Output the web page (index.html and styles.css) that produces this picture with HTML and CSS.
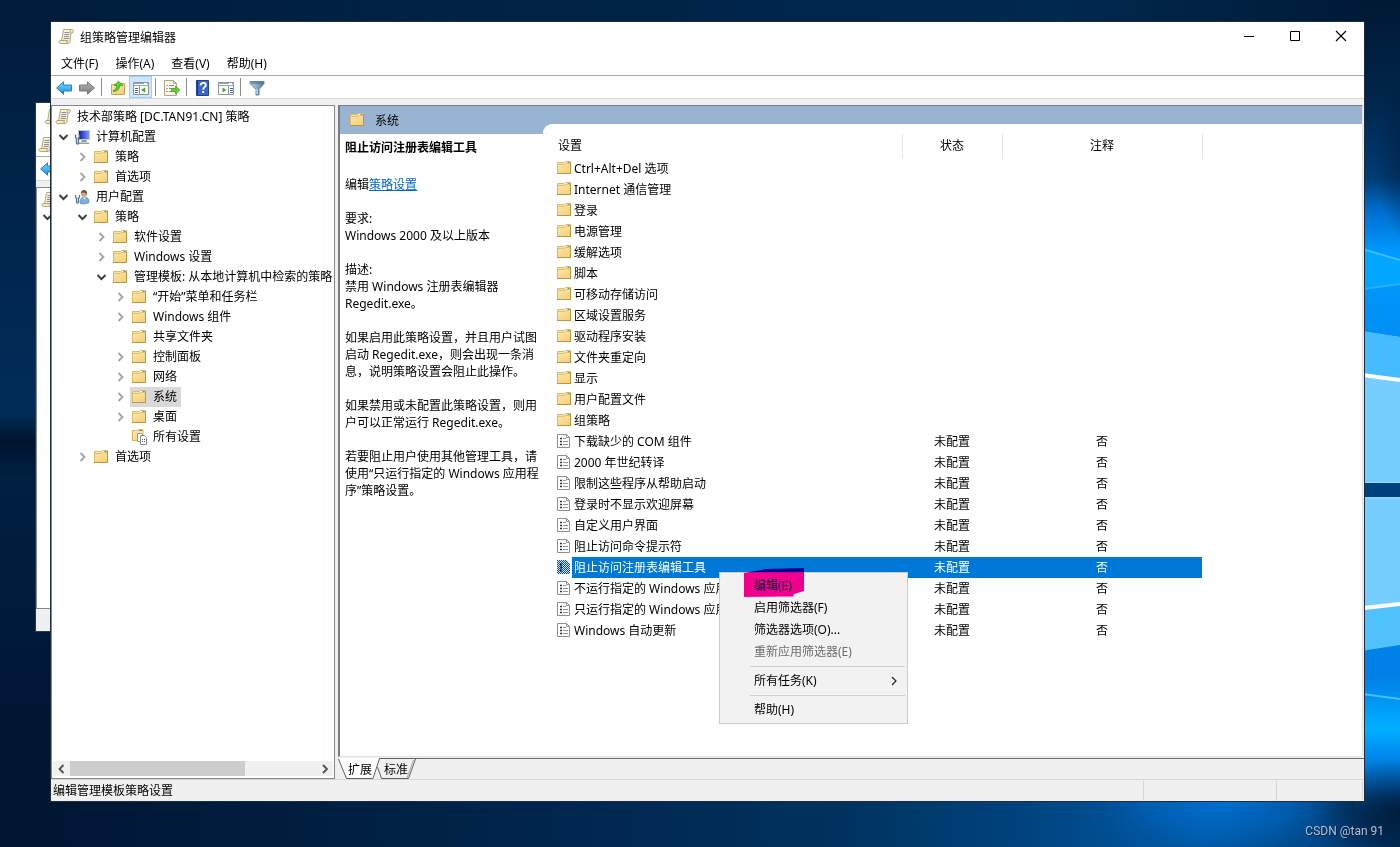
FILE: index.html
```html
<!DOCTYPE html>
<html lang="zh-CN">
<head>
<meta charset="utf-8">
<title>组策略管理编辑器</title>
<link rel="stylesheet" href="styles.css">
</head>
<body>
<svg class="defs" aria-hidden="true">
  <defs>
    <linearGradient id="gold" x1="0" y1="0" x2="0.6" y2="1"><stop offset="0" stop-color="#fdeab0"/><stop offset="1" stop-color="#f5d27c"/></linearGradient>
    <linearGradient id="blueArrow" x1="0" y1="0" x2="0" y2="1"><stop offset="0" stop-color="#7fd4fa"/><stop offset="1" stop-color="#0f96e6"/></linearGradient>
    <linearGradient id="greyArrow" x1="0" y1="0" x2="0" y2="1"><stop offset="0" stop-color="#b5b5b5"/><stop offset="1" stop-color="#7c7c7c"/></linearGradient>
    <linearGradient id="paper" x1="0" y1="0" x2="1" y2="1"><stop offset="0" stop-color="#fffdf0"/><stop offset="1" stop-color="#ecdcae"/></linearGradient>
    <linearGradient id="screen" x1="0" y1="0" x2="1" y2="0"><stop offset="0" stop-color="#0a14b8"/><stop offset="1" stop-color="#7fa4ff"/></linearGradient>
    <linearGradient id="funnel" x1="0" y1="0" x2="1" y2="0"><stop offset="0" stop-color="#b9d3e6"/><stop offset="1" stop-color="#557f9e"/></linearGradient>
    <pattern id="dither" width="2" height="2" patternUnits="userSpaceOnUse"><rect width="1" height="1" fill="#0a4f9a"/><rect x="1" y="1" width="1" height="1" fill="#0a4f9a"/></pattern>
  </defs>
  <symbol id="folder" viewBox="0 0 16 16">
    <path d="M1.500 2.500H8.500L9.500 1.500h5v12h-13z" fill="url(#gold)" stroke="#dcbb68"/>
    <path d="M9.500 2.500h2" stroke="#fff"/><path d="M11.500 2.500h2" stroke="#4a9be0"/>
    <path d="M2 4.500h6.500L9.500 3.500H14" fill="none" stroke="#e2c16c"/>
    <path d="M1 13.500h14M14.500 2v12" stroke="#bd9640" fill="none"/>
  </symbol>
  <symbol id="scroll" viewBox="0 0 16 16">
    <path d="M5.500.500h8.500c1.800 0 1.800 3.500 0 3.500h-1L12 12c0 1.800-.8 2.500-2 2.500H2.500C.5 14.500.5 11.500 2.500 11.500h1.200z" fill="url(#paper)" stroke="#a8935c" stroke-width=".8"/>
    <path d="M2.500 11.500h7c-1 1-.6 3 .6 3M13 4c-1 0-1.200-3 .5-3.500" fill="none" stroke="#a8935c" stroke-width=".8"/>
    <path d="M6.500 3.500h5M6.300 5.500h5M6 7.500h5M5.800 9.500h5" stroke="#8a8ea6" stroke-width="1"/>
  </symbol>
  <symbol id="computer" viewBox="0 0 16 16">
    <path d="M4.500 1.500h11v9h-11z" fill="url(#screen)" stroke="#c4c8cc"/>
    <path d="M8 11h4l1 2H7zM5 13.500h10v1.500H5z" fill="#9a9da0"/>
    <path d="M1.500 5.500v3l1 1V14c0 1.500 2 1.500 2 0V9.500l1-1v-3" fill="none" stroke="#5c7488" stroke-width="1.300"/>
    <path d="M3.500 8v6" stroke="#b9cfdf"/>
  </symbol>
  <symbol id="user" viewBox="0 0 16 16">
    <path d="M6 14c0-4 1.500-6 4.500-6s4.500 2 4.500 5c0 2-9 2.500-9 1z" fill="#78aee0" stroke="#4b82b8" stroke-width=".7"/>
    <path d="M9 8.500l1.500 2 1.500-2z" fill="#fff"/>
    <circle cx="10" cy="5" r="3" fill="#dba678"/><path d="M6.800 4.500C7 1.500 9 .800 10.500 1c2.500.3 3 3 1.800 5-.2-2-1.500-2.500-2.800-2.500-1 0-2 .4-2.700 1z" fill="#70503c"/>
    <path d="M1.500 6v2.500l1 1V13c0 1.500 2 1.500 2 0V9.500l1-1V6" fill="none" stroke="#5c7488" stroke-width="1.200"/><path d="M3.500 8v5" stroke="#b9cfdf"/>
  </symbol>
  <symbol id="allset" viewBox="0 0 16 16">
    <path d="M1.500 1.500h5l1-1h4.500v11H1.500z" fill="url(#gold)" stroke="#d9b45c"/><path d="M8 1.500h3" stroke="#4a9be0"/>
    <path d="M6.500 4.500h4l2 2v6h-6z" fill="#fff" stroke="#999"/>
    <path d="M9.500 6.500h4l2 2v7h-6z" fill="#fff" stroke="#8a8a8a"/>
    <path d="M11 10.500h1M13 10.500h1M11 12.500h1M13 12.500h1" stroke="#555"/>
  </symbol>
  <symbol id="setting" viewBox="0 0 16 16">
    <path d="M1.500 1.500h9l3 3v10h-12z" fill="#fff" stroke="#8e8e8e"/><path d="M10.500 1.500v3h3" fill="none" stroke="#8e8e8e"/>
    <path d="M4 5.500h2M4 8.500h2M4 11.500h2" stroke="#333" stroke-width="1.600"/><path d="M7 5.500h3M7 8.500h5M7 11.500h5" stroke="#8a92aa"/>
  </symbol>
  <symbol id="setting-on" viewBox="0 0 16 16">
    <path d="M1 1h9.500L14 4.500V15H1z" fill="#cfe2f3"/><path d="M4 5.500h2M4 8.500h2M4 11.500h2" stroke="#111" stroke-width="2"/>
    <path d="M1 1h9.500L14 4.500V15H1z" fill="url(#dither)"/>
  </symbol>
  <symbol id="back" viewBox="0 0 16 16"><path d="M.6 8L7.500 1.800V5h8v6h-8v3.200z" fill="url(#blueArrow)" stroke="#1c75b8" stroke-width=".9"/></symbol>
  <symbol id="forward" viewBox="0 0 16 16"><path d="M15.400 8L8.500 1.800V5h-8v6h8v3.200z" fill="url(#greyArrow)" stroke="#6f6f6f" stroke-width=".9"/></symbol>
  <symbol id="up" viewBox="0 0 16 16">
    <path d="M1.500 4.500h6l1-1h6v11h-13z" fill="url(#gold)" stroke="#c9a24a"/>
    <path d="M3 10.500c2.500-.5 3.500-2 3.500-5H4L8.500 1.200 13 5.500H9.500c0 4-2.500 6-6 6z" fill="#5fd133" stroke="#2b8f1a" stroke-width=".7"/>
  </symbol>
  <symbol id="treepane" viewBox="0 0 16 16">
    <path d="M.5 2.500h15v12H.5z" fill="#fff" stroke="#8c949c"/><path d="M1 3.500h14M1 5.500h14" stroke="#98a2ac"/><path d="M11 3.500h3" stroke="#fff"/>
    <path d="M6.500 6v8" stroke="#8c949c"/><path d="M2 8.500h3M2 10.500h3M2 12.500h3" stroke="#3d6fa5"/><path d="M12 7.500v5l-4-2.500z" fill="#3bb21c"/>
  </symbol>
  <symbol id="actpane" viewBox="0 0 16 16">
    <path d="M.5 2.500h15v12H.5z" fill="#fff" stroke="#8c949c"/><path d="M1 3.500h14M1 5.500h14" stroke="#98a2ac"/><path d="M11 3.500h3" stroke="#fff"/>
    <path d="M10.500 6v8" stroke="#8c949c"/><path d="M12 8.500h3M12 10.500h3M12 12.500h3" stroke="#3d6fa5"/><path d="M4.500 7.500v5l4-2.500z" fill="#3bb21c"/>
  </symbol>
  <symbol id="export" viewBox="0 0 16 16">
    <path d="M.5.500h9l3 3v12H.5z" fill="#fdf8e4" stroke="#aaa68f"/><path d="M9.500.500v3h3" fill="none" stroke="#aaa68f"/>
    <path d="M2.500 5.500h1M2.500 8.500h1M2.500 11.500h1" stroke="#555"/><path d="M5 5.500h5M5 8.500h3M5 11.500h3" stroke="#8a8f9c"/>
    <path d="M7.500 8.500h4v-2.500l4.300 4-4.300 4v-2.500h-4z" fill="#5fd133" stroke="#2f9c1b" stroke-width=".7"/>
  </symbol>
  <symbol id="help" viewBox="0 0 16 16">
    <path d="M1.500.500h12v15h-12z" fill="#3d63cf" stroke="#23408f"/><path d="M2.500 1v14" stroke="#1d3488"/>
    <path d="M5.600 5.600C5.600 2 10.800 2 10.800 5c0 2.200-2.600 2.200-2.600 4.800" fill="none" stroke="#fff" stroke-width="1.900"/><rect x="7.200" y="11" width="2" height="2" fill="#fff"/>
  </symbol>
  <symbol id="filter" viewBox="0 0 16 16"><path d="M1 1.500h14v2L10 9.500v5.500H7V9.500L1 3.500z" fill="url(#funnel)" stroke="#5b7a92" stroke-width=".9"/><path d="M2 3h12" stroke="#3e647f"/><path d="M8 9v5" stroke="#e4f0f8"/></symbol>
  <symbol id="closed" viewBox="0 0 10 10"><path d="M2.500 1L6.500 5 2.500 9" fill="none" stroke="#a3a3a3" stroke-width="1.800"/></symbol>
  <symbol id="open" viewBox="0 0 10 10"><path d="M.5 3L4.500 7 8.500 3" fill="none" stroke="#404040" stroke-width="2"/></symbol>
</svg>

<main class="desktop">
  <svg class="wallpaper" viewBox="0 0 1400 847" preserveAspectRatio="none" aria-hidden="true">
    <defs>
      <linearGradient id="base" x1="0" x2="1" y1="0" y2="0"><stop offset="0" stop-color="#001632"/><stop offset=".2" stop-color="#001d3e"/><stop offset=".4" stop-color="#00264e"/><stop offset=".6" stop-color="#00325f"/><stop offset=".74" stop-color="#004580"/><stop offset=".86" stop-color="#005aa8"/><stop offset=".94" stop-color="#004482"/><stop offset="1" stop-color="#002a54"/></linearGradient>
      <linearGradient id="top" x1="0" x2="1" y1="0" y2="0"><stop offset="0" stop-color="#001c3c"/><stop offset=".15" stop-color="#001f40"/><stop offset=".4" stop-color="#002347"/><stop offset=".76" stop-color="#00294f"/><stop offset="1" stop-color="#001834"/></linearGradient>
      <linearGradient id="left" x1="0" x2="0" y1="0" y2="1"><stop offset="0" stop-color="#001b3b"/><stop offset=".25" stop-color="#00244a"/><stop offset=".52" stop-color="#002d57"/><stop offset=".555" stop-color="#00142e"/><stop offset=".6" stop-color="#001f42"/><stop offset=".8" stop-color="#001a39"/><stop offset=".94" stop-color="#001632"/></linearGradient>
      <linearGradient id="right" x1="0" x2="0" y1="0" y2="1"><stop offset="0" stop-color="#001934"/><stop offset=".12" stop-color="#00264c"/><stop offset=".21" stop-color="#003c74"/><stop offset=".25" stop-color="#006fd0"/><stop offset=".3" stop-color="#009bff"/><stop offset=".39" stop-color="#0090f4"/><stop offset=".8" stop-color="#0080e6"/><stop offset=".86" stop-color="#00b0ff"/><stop offset=".89" stop-color="#008cf0"/><stop offset=".93" stop-color="#0060b4"/><stop offset=".97" stop-color="#003a70" stop-opacity="0"/></linearGradient>
      <radialGradient id="glow"><stop offset="0" stop-color="#0070d0"/><stop offset=".5" stop-color="#0062b8" stop-opacity=".7"/><stop offset="1" stop-color="#004a90" stop-opacity="0"/></radialGradient>
      <radialGradient id="shade"><stop offset="0" stop-color="#001a36" stop-opacity=".8"/><stop offset="1" stop-color="#001a36" stop-opacity="0"/></radialGradient>
    </defs>
    <rect width="1400" height="847" fill="url(#base)"/>
    <rect width="1400" height="60" fill="url(#top)"/>
    <rect width="60" height="795" fill="url(#left)"/>
    <rect x="1355" width="45" height="847" fill="url(#right)"/>
    <ellipse cx="1220" cy="800" rx="150" ry="70" fill="url(#glow)"/>
    <ellipse cx="1420" cy="160" rx="45" ry="90" fill="url(#shade)"/>
    <ellipse cx="1400" cy="810" rx="90" ry="50" fill="url(#shade)"/>
    <path d="M1355 245L1400 260V284L1355 289z" fill="#00a6ff"/>
    <path d="M1355 247L1400 260" stroke="#38bdff" stroke-width="2"/>
    <path d="M1355 290L1400 284" stroke="#28aefa" stroke-width="2"/>
    <path d="M1355 330L1400 337V608L1355 652z" fill="#76ceff"/>
    <path d="M1355 330L1400 337V379L1355 373z" fill="#45bcff"/>
    <path d="M1355 374L1400 380" stroke="#fff" stroke-width="4"/>
    <rect x="1355" y="483" width="45" height="14" fill="#00427e"/>
    <path d="M1355 482.500h45M1355 498h45" stroke="#9fdcff"/>
    <path d="M1355 609L1400 604V645L1355 652z" fill="#50c2fb"/>
    <path d="M1355 609L1400 604" stroke="#fff" stroke-width="4"/>
    <path d="M1355 693L1400 699" stroke="#45c0ff" stroke-width="2"/>
  </svg>

  <section class="window back-window" aria-label="组策略管理">
    <header class="back-title"><svg class="icon"><use href="#scroll"/></svg></header>
    <div class="back-menu"><svg class="icon"><use href="#scroll"/></svg></div>
    <div class="back-tools"><svg class="icon"><use href="#back"/></svg></div>
    <div class="back-tree"><svg class="icon"><use href="#scroll"/></svg><svg class="arrow"><use href="#open"/></svg></div>
    <footer class="back-status"></footer>
  </section>

  <section class="window main-window" aria-label="组策略管理编辑器">
    <header class="titlebar">
      <svg class="icon"><use href="#scroll"/></svg>
      <h1>组策略管理编辑器</h1>
      <div class="caption">
        <button aria-label="最小化"><svg viewBox="0 0 12 12"><path d="M1 6.500h10" stroke="#000"/></svg></button>
        <button aria-label="最大化"><svg viewBox="0 0 12 12"><path d="M1.500 1.500h9v9h-9z" fill="none" stroke="#000"/></svg></button>
        <button aria-label="关闭"><svg viewBox="0 0 12 12"><path d="M1 1l10 10M11 1L1 11" stroke="#000" stroke-width="1.100"/></svg></button>
      </div>
    </header>
    <nav class="menubar"><button>文件(F)</button><button>操作(A)</button><button>查看(V)</button><button>帮助(H)</button></nav>
    <div class="toolbar" role="toolbar">
      <button aria-label="后退"><svg class="icon"><use href="#back"/></svg></button>
      <button aria-label="前进"><svg class="icon"><use href="#forward"/></svg></button>
      <i class="sep"></i>
      <button aria-label="上一级"><svg class="icon"><use href="#up"/></svg></button>
      <button class="on" aria-label="显示控制台树"><svg class="icon"><use href="#treepane"/></svg></button>
      <i class="sep"></i>
      <button aria-label="导出列表"><svg class="icon"><use href="#export"/></svg></button>
      <i class="sep"></i>
      <button aria-label="帮助"><svg class="icon"><use href="#help"/></svg></button>
      <button aria-label="显示操作窗格"><svg class="icon"><use href="#actpane"/></svg></button>
      <i class="sep"></i>
      <button aria-label="筛选器"><svg class="icon"><use href="#filter"/></svg></button>
    </div>

    <div class="panes">
      <aside class="tree-pane">
        <div class="tree">
          <button class="label root"><svg class="icon"><use href="#scroll"/></svg>技术部策略 [DC.TAN91.CN] 策略</button>
          <ul>
            <li><div class="row"><button class="twist" aria-label="折叠"><svg><use href="#open"/></svg></button><button class="label"><svg class="icon"><use href="#computer"/></svg>计算机配置</button></div>
              <ul>
                <li><div class="row"><button class="twist" aria-label="展开"><svg><use href="#closed"/></svg></button><button class="label"><svg class="icon"><use href="#folder"/></svg>策略</button></div></li>
                <li><div class="row"><button class="twist" aria-label="展开"><svg><use href="#closed"/></svg></button><button class="label"><svg class="icon"><use href="#folder"/></svg>首选项</button></div></li>
              </ul>
            </li>
            <li><div class="row"><button class="twist" aria-label="折叠"><svg><use href="#open"/></svg></button><button class="label"><svg class="icon"><use href="#user"/></svg>用户配置</button></div>
              <ul>
                <li><div class="row"><button class="twist" aria-label="折叠"><svg><use href="#open"/></svg></button><button class="label"><svg class="icon"><use href="#folder"/></svg>策略</button></div>
                  <ul>
                    <li><div class="row"><button class="twist" aria-label="展开"><svg><use href="#closed"/></svg></button><button class="label"><svg class="icon"><use href="#folder"/></svg>软件设置</button></div></li>
                    <li><div class="row"><button class="twist" aria-label="展开"><svg><use href="#closed"/></svg></button><button class="label"><svg class="icon"><use href="#folder"/></svg>Windows 设置</button></div></li>
                    <li><div class="row"><button class="twist" aria-label="折叠"><svg><use href="#open"/></svg></button><button class="label"><svg class="icon"><use href="#folder"/></svg>管理模板: 从本地计算机中检索的策略</button></div>
                      <ul>
                        <li><div class="row"><button class="twist" aria-label="展开"><svg><use href="#closed"/></svg></button><button class="label"><svg class="icon"><use href="#folder"/></svg>“开始”菜单和任务栏</button></div></li>
                        <li><div class="row"><button class="twist" aria-label="展开"><svg><use href="#closed"/></svg></button><button class="label"><svg class="icon"><use href="#folder"/></svg>Windows 组件</button></div></li>
                        <li><div class="row"><span class="twist"></span><button class="label"><svg class="icon"><use href="#folder"/></svg>共享文件夹</button></div></li>
                        <li><div class="row"><button class="twist" aria-label="展开"><svg><use href="#closed"/></svg></button><button class="label"><svg class="icon"><use href="#folder"/></svg>控制面板</button></div></li>
                        <li><div class="row"><button class="twist" aria-label="展开"><svg><use href="#closed"/></svg></button><button class="label"><svg class="icon"><use href="#folder"/></svg>网络</button></div></li>
                        <li><div class="row"><button class="twist" aria-label="展开"><svg><use href="#closed"/></svg></button><button class="label current"><svg class="icon"><use href="#folder"/></svg>系统</button></div></li>
                        <li><div class="row"><button class="twist" aria-label="展开"><svg><use href="#closed"/></svg></button><button class="label"><svg class="icon"><use href="#folder"/></svg>桌面</button></div></li>
                        <li><div class="row"><span class="twist"></span><button class="label"><svg class="icon"><use href="#allset"/></svg>所有设置</button></div></li>
                      </ul>
                    </li>
                  </ul>
                </li>
                <li><div class="row"><button class="twist" aria-label="展开"><svg><use href="#closed"/></svg></button><button class="label"><svg class="icon"><use href="#folder"/></svg>首选项</button></div></li>
              </ul>
            </li>
          </ul>
        </div>
        <div class="hscroll">
          <button aria-label="向左滚动"><svg viewBox="0 0 10 10"><path d="M6.500 1L2.500 5l4 4" fill="none" stroke="#505050" stroke-width="1.800"/></svg></button>
          <div class="track"><div class="thumb"></div></div>
          <button aria-label="向右滚动"><svg viewBox="0 0 10 10"><path d="M3 1l4 4-4 4" fill="none" stroke="#505050" stroke-width="1.800"/></svg></button>
        </div>
      </aside>

      <div class="detail">
        <div class="view">
          <section class="description">
            <h2><svg class="icon"><use href="#folder"/></svg>系统</h2>
            <div class="text">
              <h3>阻止访问注册表编辑工具</h3>
              <p>编辑<a href="#policy">策略设置</a></p>
              <p>要求:<br>Windows 2000 及以上版本</p>
              <p>描述:<br>禁用 Windows 注册表编辑器<br>Regedit.exe。</p>
              <p>如果启用此策略设置，并且用户试图<br>启动 Regedit.exe，则会出现一条消<br>息，说明策略设置会阻止此操作。</p>
              <p>如果禁用或未配置此策略设置，则用<br>户可以正常运行 Regedit.exe。</p>
              <p>若要阻止用户使用其他管理工具，请<br>使用“只运行指定的 Windows 应用程<br>序”策略设置。</p>
            </div>
          </section>
          <section class="list">
            <table>
              <colgroup><col class="c-icon"><col class="c-name"><col class="c-state"><col class="c-note"></colgroup>
              <thead><tr><th colspan="2">设置</th><th>状态</th><th>注释</th></tr></thead>
              <tbody>
                <tr><td><svg class="icon"><use href="#folder"/></svg></td><td>Ctrl+Alt+Del 选项</td><td></td><td></td></tr>
                <tr><td><svg class="icon"><use href="#folder"/></svg></td><td>Internet 通信管理</td><td></td><td></td></tr>
                <tr><td><svg class="icon"><use href="#folder"/></svg></td><td>登录</td><td></td><td></td></tr>
                <tr><td><svg class="icon"><use href="#folder"/></svg></td><td>电源管理</td><td></td><td></td></tr>
                <tr><td><svg class="icon"><use href="#folder"/></svg></td><td>缓解选项</td><td></td><td></td></tr>
                <tr><td><svg class="icon"><use href="#folder"/></svg></td><td>脚本</td><td></td><td></td></tr>
                <tr><td><svg class="icon"><use href="#folder"/></svg></td><td>可移动存储访问</td><td></td><td></td></tr>
                <tr><td><svg class="icon"><use href="#folder"/></svg></td><td>区域设置服务</td><td></td><td></td></tr>
                <tr><td><svg class="icon"><use href="#folder"/></svg></td><td>驱动程序安装</td><td></td><td></td></tr>
                <tr><td><svg class="icon"><use href="#folder"/></svg></td><td>文件夹重定向</td><td></td><td></td></tr>
                <tr><td><svg class="icon"><use href="#folder"/></svg></td><td>显示</td><td></td><td></td></tr>
                <tr><td><svg class="icon"><use href="#folder"/></svg></td><td>用户配置文件</td><td></td><td></td></tr>
                <tr><td><svg class="icon"><use href="#folder"/></svg></td><td>组策略</td><td></td><td></td></tr>
                <tr><td><svg class="icon"><use href="#setting"/></svg></td><td>下载缺少的 COM 组件</td><td>未配置</td><td>否</td></tr>
                <tr><td><svg class="icon"><use href="#setting"/></svg></td><td>2000 年世纪转译</td><td>未配置</td><td>否</td></tr>
                <tr><td><svg class="icon"><use href="#setting"/></svg></td><td>限制这些程序从帮助启动</td><td>未配置</td><td>否</td></tr>
                <tr><td><svg class="icon"><use href="#setting"/></svg></td><td>登录时不显示欢迎屏幕</td><td>未配置</td><td>否</td></tr>
                <tr><td><svg class="icon"><use href="#setting"/></svg></td><td>自定义用户界面</td><td>未配置</td><td>否</td></tr>
                <tr><td><svg class="icon"><use href="#setting"/></svg></td><td>阻止访问命令提示符</td><td>未配置</td><td>否</td></tr>
                <tr class="selected"><td><svg class="icon"><use href="#setting-on"/></svg></td><td>阻止访问注册表编辑工具</td><td>未配置</td><td>否</td></tr>
                <tr><td><svg class="icon"><use href="#setting"/></svg></td><td>不运行指定的 Windows 应用程序</td><td>未配置</td><td>否</td></tr>
                <tr><td><svg class="icon"><use href="#setting"/></svg></td><td>只运行指定的 Windows 应用程序</td><td>未配置</td><td>否</td></tr>
                <tr><td><svg class="icon"><use href="#setting"/></svg></td><td>Windows 自动更新</td><td>未配置</td><td>否</td></tr>
              </tbody>
            </table>
          </section>
        </div>
        <div class="tabs">
          <svg class="tab-shape" viewBox="0 0 80 21" aria-hidden="true">
            <path d="M0 0h41.500L35.500 20H8.500z" fill="#fff"/><path d="M.5 1L8.500 20.500H35L41.500.5H80" fill="none" stroke="#606060"/>
            <path d="M39.500 9L43.500 20.500H70.500L77.500 1" fill="none" stroke="#606060"/><path d="M69 20L75.500 2" stroke="#a8a8a8"/>
          </svg>
          <button>扩展</button><button>标准</button>
        </div>
      </div>
    </div>

    <footer class="status"><span>编辑管理模板策略设置</span><i></i><i></i></footer>

    <div class="context" role="menu">
      <button role="menuitem">编辑(E)</button>
      <button role="menuitem">启用筛选器(F)</button>
      <button role="menuitem">筛选器选项(O)...</button>
      <button role="menuitem" disabled>重新应用筛选器(E)</button>
      <hr>
      <button role="menuitem">所有任务(K)<svg viewBox="0 0 10 10"><path d="M3 1l4 4-4 4" fill="none" stroke="#222" stroke-width="1.200"/></svg></button>
      <hr>
      <button role="menuitem">帮助(H)</button>
    </div>
    <svg class="marker" viewBox="0 0 62 30" aria-hidden="true"><path d="M1 5L24 1 61 0V23L51 26 50 28.500 1 29z" fill="#f0008c"/></svg>
  </section>

  <p class="watermark">CSDN @tan 91</p>
</main>
</body>
</html>
```
FILE: styles.css
```css
* { box-sizing: border-box; }

body {
  margin: 0;
  font: 12px/17px "Noto Sans", "Noto Sans CJK SC", sans-serif;
  color: #000;
}

h1, h2, h3, p, ul { margin: 0; padding: 0; font-size: inherit; font-weight: normal; }
ul { list-style: none; }
button { border: 0; padding: 0; background: none; font: inherit; color: inherit; white-space: nowrap; }
.defs { position: absolute; width: 0; height: 0; }
.icon { width: 16px; height: 16px; flex: none; display: block; }

.desktop { position: relative; height: 100vh; overflow: hidden; background: #001d3f; }
.wallpaper { position: absolute; inset: 0; width: 100%; height: 100%; }
.window { position: absolute; display: flex; flex-direction: column; overflow: hidden; }

/* window behind */
.back-window { inset: 102px 200px 215px 35px; background: #fff; border: 1px solid #2c3846; border-right: 0; }
.back-title { height: 29px; padding: 6px 8px; }
.back-menu { height: 25px; padding: 5px 2px; border-bottom: 1px solid #a9a9ad; }
.back-tools { height: 24px; padding: 4px; border-bottom: 1px solid #d9d9d9; }
.back-tree { flex: 1; margin-top: 6px; padding: 4px; border: 1px solid #828790; outline: 6px solid #f0f0f0; position: relative; }
.back-tree .arrow { display: block; width: 10px; height: 10px; margin: 4px 2px; }
.back-status { height: 22px; background: #f0f0f0; position: relative; }

/* main window */
.main-window { inset: 22px 36px 46px 51px; background: #f0f0f0; box-shadow: 0 0 0 1px #1e2c3c; }
.titlebar { display: flex; align-items: center; height: 30px; padding-left: 7px; gap: 6px; background: #fff; }
.titlebar h1 { flex: 1; }
.caption { display: flex; align-self: stretch; }
.caption button { width: 46px; height: 28px; display: grid; place-items: center; }
.caption svg { width: 12px; height: 12px; }
.menubar { display: flex; gap: 17px; height: 24px; padding-left: 10px; background: #fff; border-bottom: 1px solid #a9a9ad; }
.toolbar { display: flex; align-items: center; height: 23px; padding-left: 1px; background: #fff; border-bottom: 1px solid #d9d9d9; }
.toolbar button { width: 23px; height: 22px; padding-top: 1px; display: grid; place-items: center; }
.toolbar .on { background: #cce8ff; border: 1px solid #99d1ff; }
.sep { width: 1px; height: 18px; margin: 0 4px 0 3px; background: #8d8d8d; }

.panes { flex: 1; min-height: 0; display: flex; gap: 3px; padding-top: 6px; }
.tree-pane { width: 284px; flex: none; display: flex; flex-direction: column; background: #fff; border: 1px solid #828790; }
.tree { flex: 1; overflow: hidden; padding: 1px 0 0 3px; }
.tree ul ul { padding-left: 19px; }
.row { display: flex; gap: 1px; }
.label { display: flex; align-items: center; gap: 6px; height: 20px; padding: 0 4px 1px 1px; }
.current { background: #d9d9d9; }
.root { margin-left: -1px; }
.twist { width: 17px; height: 20px; flex: none; display: grid; place-items: center; }
.twist svg { width: 10px; height: 10px; }
.hscroll { display: flex; height: 15px; margin: 0 1px 2px; background: #f0f0f0; }
.hscroll button { width: 17px; display: grid; place-items: center; }
.hscroll svg { width: 10px; height: 10px; }
.track { flex: 1; }
.thumb { width: 71%; height: 15px; background: #cdcdcd; }

.detail { flex: 1; min-width: 0; display: flex; flex-direction: column; }
.view {
  flex: 1; min-height: 0; display: flex; margin-right: 1px;
  background: linear-gradient(#99b4d1 28px, #fff 28px);
  border: 1px solid #e3e3e3; border-left: 2px solid #7c7c7c; border-top: 1px solid #7c7c7c;
}
.description { width: 203px; flex: none; }
.description h2 { display: flex; align-items: center; gap: 10px; height: 28px; padding-left: 9px; }
.text { padding: 5px 0 0 5px; white-space: nowrap; }
.text h3 { font-weight: bold; margin-bottom: 20px; }
.text p { margin-bottom: 17px; }
.text a { color: #0066cc; }
.list { flex: 1; min-width: 0; margin-top: 18px; padding: 10px 0 0 12px; background: #fff; border-top-left-radius: 9px; overflow: hidden; }
table { width: 647px; table-layout: fixed; border-collapse: collapse; }
.c-icon { width: 17px; }
.c-name { width: 330px; }
.c-state { width: 100px; }
.c-note { width: 200px; }
th, td { padding: 0 2px; text-align: center; white-space: nowrap; font-weight: normal; }
th { height: 24px; padding-bottom: 1px; border-right: 1px solid #e5e5e5; }
td { height: 21px; }
th:first-child { text-align: left; padding-left: 3px; }
td:nth-child(2) { text-align: left; }
td:first-child { padding: 0 0 1px 1px; }
.selected td:not(:first-child) { background: #0078d7; color: #fff; }

.tabs { position: relative; display: flex; gap: 12px; height: 21px; margin-top: 1px; padding-left: 10px; border-top: 1px solid #696969; }
.tabs button { position: relative; }
.tab-shape { position: absolute; left: 0; top: -1px; width: 80px; height: 21px; }

.status { display: flex; height: 22px; padding-left: 2px; line-height: 22px; border-top: 1px solid #d7d7d7; }
.status span { flex: 1; }
.status i { width: 133px; margin: 1px 0; border-left: 1px solid #d7d7d7; }
.status i:last-child { width: 87px; border-right: 1px solid #d7d7d7; margin-right: 1px; }

.context { position: absolute; left: 668px; top: 550px; width: 189px; padding: 2px; background: #f2f2f2; border: 1px solid #ccc; }
.context button { display: flex; align-items: center; justify-content: space-between; width: 100%; height: 22px; padding: 0 6px 1px 32px; }
.context button:disabled { color: #6d6d6d; }
.context svg { width: 10px; height: 10px; }
.context hr { height: 1px; margin: 3px 0 3px 28px; border: 0; background: #d0d0d0; }
.marker { position: absolute; left: 692px; top: 546px; width: 62px; height: 30px; mix-blend-mode: darken; }

.watermark { position: absolute; right: 16px; bottom: 7px; font-family: Roboto, sans-serif; color: #b3c0d2; text-shadow: 1px 1px 1px #002040; }
```
